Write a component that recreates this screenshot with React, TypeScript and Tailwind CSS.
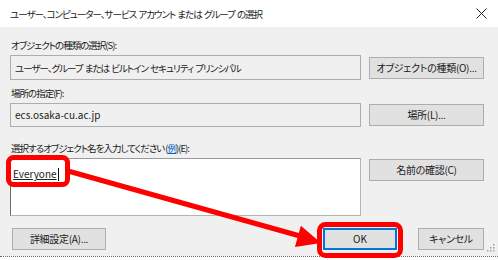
import React from 'react';

const Button: React.FC<{ label: string; className?: string; focused?: boolean }> = ({ label, className = '', focused }) => (
  <div
    className={`h-[22px] flex items-center justify-center whitespace-nowrap bg-[#e1e1e1] text-[#1a1a1a] text-[10px] tracking-[-0.3px] border ${
      focused ? 'border-[#0078d7] border-2' : 'border-[#adadad]'
    } ${className}`}
  >
    {label}
  </div>
);

const App: React.FC = () => {
  return (
    <div className="relative w-[498px] h-[260px] overflow-hidden bg-white font-['Noto_Sans_CJK_JP',sans-serif] text-[9.5px] leading-[14px] tracking-[-1px] text-[#1a1a1a] [font-feature-settings:'palt']">
      {/* title bar */}
      <div className="h-[27px] flex items-center justify-between pl-[10px] pr-[10px] bg-white">
        <span className="[word-spacing:1px]">ユーザー、コンピューター、サービス アカウント または グループ の選択</span>
        <svg width="11" height="11" viewBox="0 0 11 11" className="mr-[1px]">
          <path d="M0.5 0.5 L10.5 10.5 M10.5 0.5 L0.5 10.5" stroke="#222" strokeWidth="1" />
        </svg>
      </div>

      {/* body */}
      <div className="relative h-[229px] bg-[#f0f0f0] pl-[10px] pr-[14px] pt-[11px] flex flex-col">
        <div className="pl-[1px]">オブジェクトの種類の選択(S):</div>
        <div className="mt-[3px] flex items-center gap-[8px]">
          <div className="w-[351px] h-[25px] flex items-center px-[4px] bg-[#f0f0f0] border border-[#adadad] text-[#222] [word-spacing:1px]">
            ユーザー、グループ または ビルトイン セキュリティ プリンシパル
          </div>
          <Button label="オブジェクトの種類(O)..." className="w-[115px]" />
        </div>

        <div className="mt-[6px] pl-[1px]">場所の指定(F):</div>
        <div className="mt-[3px] flex items-center gap-[8px]">
          <div className="w-[351px] h-[24px] flex items-center px-[4px] bg-[#f0f0f0] border border-[#adadad] text-[#222] text-[10px] tracking-normal">
            ecs.osaka-cu.ac.jp
          </div>
          <Button label="場所(L)..." className="w-[115px]" />
        </div>

        <div className="mt-[14px] pl-[1px]">
          選択するオブジェクト名を入力してください (<span className="text-[#0066cc] underline">例</span>)(E):
        </div>
        <div className="mt-[3px] flex items-start gap-[8px]">
          <div className="w-[351px] h-[58px] bg-white border border-[#b4b4b4] border-l-[#6e6e6e] border-t-[#9a9a9a] px-[2px] pt-[8px]">
            <span className="inline-flex items-center">
              <span className="underline text-[#222] text-[10px] tracking-normal">Everyone</span>
              <span className="w-px h-[13px] bg-[#111] ml-[1px]" />
            </span>
          </div>
          <Button label="名前の確認(C)" className="w-[115px] mt-[1px]" />
        </div>

        <div className="mt-[12px] flex items-center">
          <Button label="詳細設定(A)..." className="w-[94px] ml-[2px]" />
          <div className="flex-1" />
          <Button label="OK" focused className="w-[74px] tracking-normal" />
          <Button label="キャンセル" className="w-[66px] ml-[21px]" />
        </div>

        {/* resize grip */}
        <svg width="8" height="8" viewBox="0 0 8 8" className="absolute right-[3px] bottom-[4px]">
          <rect x="6" y="0" width="1.5" height="1.5" fill="#a0a0a0" />
          <rect x="3" y="3" width="1.5" height="1.5" fill="#a0a0a0" />
          <rect x="6" y="3" width="1.5" height="1.5" fill="#a0a0a0" />
          <rect x="0" y="6" width="1.5" height="1.5" fill="#a0a0a0" />
          <rect x="3" y="6" width="1.5" height="1.5" fill="#a0a0a0" />
          <rect x="6" y="6" width="1.5" height="1.5" fill="#a0a0a0" />
        </svg>
      </div>

      {/* strip below the dialog */}
      <div className="h-[4px] bg-white border-t border-dotted border-[#666]" />

      {/* red annotations */}
      <svg width="498" height="260" className="absolute inset-0 pointer-events-none">
        <rect x="8.5" y="157.5" width="59" height="27" rx="5" fill="none" stroke="#ff0000" strokeWidth="5" />
        <rect x="319.5" y="224.5" width="81" height="31" rx="6" fill="none" stroke="#ff0000" strokeWidth="5" />
        <line x1="68" y1="171" x2="300" y2="236" stroke="#ff0000" strokeWidth="5" />
        <polygon points="321,243 300.9,225.8 294.9,247" fill="#ff0000" />
      </svg>
    </div>
  );
};

export default App;
